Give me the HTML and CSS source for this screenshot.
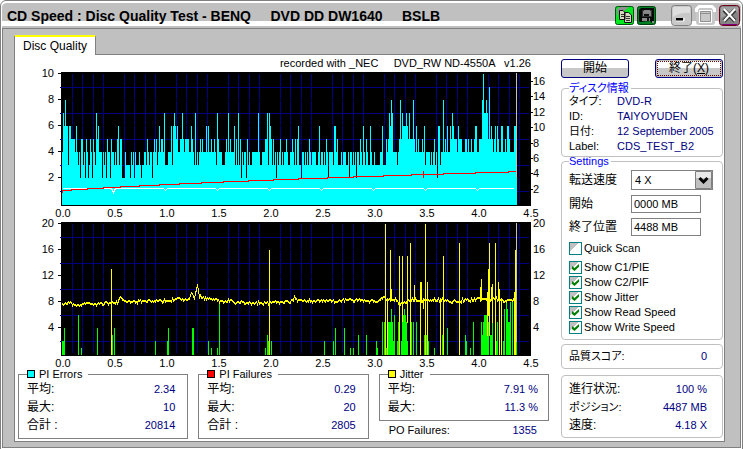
FILE: index.html
```html
<!DOCTYPE html>
<html lang="ja">
<head>
<meta charset="utf-8">
<title>CD Speed : Disc Quality Test</title>
<link rel="stylesheet" href="styles.css">
</head>
<body>
<div class="window">
  <header class="titlebar">
    <h1 class="title">CD Speed : Disc Quality Test - BENQ     DVD DD DW1640     BSLB</h1>
    <button class="tool" type="button" aria-label="Copy">
      <svg viewBox="0 0 19 19" width="19" height="19">
        <rect x=".5" y=".5" width="18" height="18" rx="2" fill="#00e820" stroke="#005010"/>
        <path d="M2 3 5 1H14L9 5 5 6 2 10Z" fill="#909090"/>
        <path d="M4.500 4.500H8l2 2V13.500H4.500ZM9.500 6.500H13.500L16.500 9V16.500H9.500Z" fill="#d8d8c0" stroke="#101010"/>
        <path d="M6 8.500h3M6 10.500h3M11 10.500h4M11 12.500h4M11 14.500h4" stroke="#303030"/>
      </svg>
    </button>
    <button class="tool" type="button" aria-label="Save">
      <svg viewBox="0 0 19 19" width="19" height="19">
        <rect x=".5" y=".5" width="18" height="18" rx="2" fill="#008020" stroke="#004010"/>
        <path d="M2 4 4 2H17V17H15L13 15 3 16 2 15Z" fill="#080808"/>
        <path d="M5.500 4.500H14.500V10.500H5.500Z" fill="#808080" stroke="#303030"/>
        <path d="M7 4h6v3H7ZM5 12h8v3H5ZM15 15h2v2h-2Z" fill="#888"/>
        <path d="M10 12h2v3h-2ZM7 8h5v2H7Z" fill="#101010"/>
      </svg>
    </button>
    <button class="tool tool-min" type="button" aria-label="Minimize">
      <svg viewBox="0 0 21 21" width="21" height="21">
        <rect x=".5" y=".5" width="20" height="20" rx="3" fill="#c8c8c8" stroke="#808080"/>
        <path d="M2 2H19V8Q10 7 2 12Z" fill="#dedede"/>
        <path d="M5 13h7v3H5Z"/><path d="M5 16h8v-3" fill="none" stroke="#fff"/>
      </svg>
    </button>
    <button class="tool" type="button" aria-label="Maximize">
      <svg viewBox="0 0 21 21" width="21" height="21">
        <rect x="1" y="1" width="19" height="19" rx="3" fill="#c8c8c8"/>
        <path d="M1.500 7V4L4 1.500H17L19.500 4V7" fill="none" stroke="#fff" stroke-width="3"/>
        <path d="M5.500 6.500H15.500V16.500H5.500ZM5.500 8.500H15.500" fill="none" stroke="#909090"/>
        <path d="M4.500 18V5.500H16.500V17.500H4.500" fill="none" stroke="#fff"/>
      </svg>
    </button>
    <button class="tool" type="button" aria-label="Close">
      <svg viewBox="0 0 21 21" width="21" height="21">
        <rect x=".5" y=".5" width="20" height="20" rx="3" fill="#858585" stroke="#700018"/>
        <path d="M3 19.500H18" stroke="#800080"/>
        <path d="M2 2H19V7Q10 8 2 13Z" fill="#a0a0a0"/>
        <path d="M5 5 16 16M16 5 5 16" stroke="#333" stroke-width="4"/>
        <path d="M5 4 16 16M16 4 5 16" stroke="#fff" stroke-width="2"/>
      </svg>
    </button>
  </header>

  <main class="content">
    <div class="tabs" role="tablist"><button class="tab" type="button" role="tab" aria-selected="true">Disc Quality</button></div>
    <div class="panel" role="tabpanel">
      <section class="results">
        <p class="recorder">recorded with _NEC     DVD_RW ND-4550A   v1.26</p>
        <svg class="chart" id="errors" viewBox="18 71 531 146" role="img" aria-label="PI Errors"></svg>
        <svg class="chart" id="failures" viewBox="18 217 531 153" role="img" aria-label="PI Failures"></svg>
        <div class="stats">
          <fieldset class="stat">
            <legend><span class="swatch cyan"></span>PI Errors</legend>
            <dl class="rows">
              <div><dt>平均:</dt><dd>2.34</dd></div>
              <div><dt>最大:</dt><dd>10</dd></div>
              <div><dt>合計 :</dt><dd>20814</dd></div>
            </dl>
          </fieldset>
          <fieldset class="stat">
            <legend><span class="swatch red"></span>PI Failures</legend>
            <dl class="rows">
              <div><dt>平均:</dt><dd>0.29</dd></div>
              <div><dt>最大:</dt><dd>20</dd></div>
              <div><dt>合計 :</dt><dd>2805</dd></div>
            </dl>
          </fieldset>
          <div class="jitter">
            <fieldset class="stat">
              <legend><span class="swatch yellow"></span>Jitter</legend>
              <dl class="rows">
                <div><dt>平均:</dt><dd>7.91 %</dd></div>
                <div><dt>最大:</dt><dd>11.3 %</dd></div>
              </dl>
            </fieldset>
            <dl class="rows outside"><div><dt>PO Failures:</dt><dd>1355</dd></div></dl>
          </div>
        </div>
      </section>

      <aside class="side">
        <div class="actions">
          <button class="push" type="button">開始</button>
          <button class="push focused" type="button">終了(<u>X</u>)</button>
        </div>
        <fieldset class="group">
          <legend>ディスク情報</legend>
          <dl class="info">
            <dt>タイプ:</dt><dd>DVD-R</dd>
            <dt>ID:</dt><dd>TAIYOYUDEN</dd>
            <dt>日付:</dt><dd>12 September 2005</dd>
            <dt>Label:</dt><dd>CDS_TEST_B2</dd>
          </dl>
        </fieldset>
        <fieldset class="group settings">
          <legend>Settings</legend>
          <div class="fields">
            <label for="speed">転送速度</label>
            <span class="combo">
              <select id="speed"><option>4 X</option></select>
              <svg class="arrow" viewBox="0 0 17 18" width="17" height="18">
                <path d="M.500.500H16.500V17.500H.500Z" fill="#e8e8e8" stroke="#808080"/>
                <path d="M1 7H16V17H1Z" fill="#c0c0c0"/>
                <path d="M4.500 7 8.500 11 12.500 7" fill="none" stroke="#000" stroke-width="3"/>
              </svg>
            </span>
            <label for="from">開始</label><input id="from" type="text" value="0000 MB">
            <label for="to">終了位置</label><input id="to" type="text" value="4488 MB">
          </div>
          <label class="check quick"><input type="checkbox">Quick Scan</label>
          <label class="check"><input type="checkbox" checked>Show C1/PIE</label>
          <label class="check"><input type="checkbox" checked>Show C2/PIF</label>
          <label class="check"><input type="checkbox" checked>Show Jitter</label>
          <label class="check"><input type="checkbox" checked>Show Read Speed</label>
          <label class="check"><input type="checkbox" checked>Show Write Speed</label>
        </fieldset>
        <dl class="rows box score"><div><dt class="kana">品質スコア:</dt><dd>0</dd></div></dl>
        <dl class="rows box progress">
          <div><dt>進行状況:</dt><dd>100 %</dd></div>
          <div><dt class="kana">ポジション:</dt><dd>4487 MB</dd></div>
          <div><dt>速度:</dt><dd>4.18 X</dd></div>
        </dl>
      </aside>
    </div>
  </main>
</div>
<script src="charts.js"></script>
</body>
</html>
```
FILE: styles.css
```css
* { box-sizing: border-box; }

body {
  margin: 0;
  background: #fff;
  color: #000;
  font: 11px/15px "Liberation Sans", "Noto Sans CJK JP", sans-serif;
  font-feature-settings: "palt";
}

button, input, select { font: inherit; color: inherit; }
dl, dd, p, h1, fieldset { margin: 0; }
legend { padding: 0; }

.window {
  display: flex;
  flex-direction: column;
  min-height: 100vh;
  border: 1px solid #808080;
  border-radius: 6px 6px 0 0;
  padding: 1px;
  background: #fff;
}

.titlebar {
  display: flex;
  align-items: center;
  gap: 3px;
  height: 26px;
  padding: 0 1px 0 5px;
  border-top: 1px solid #fff;
  border-radius: 5px 5px 0 0;
  background: linear-gradient(#c0c0c0 18px, #fff 18px, #fff 23px, #c0c0c0 23px);
}

.title {
  flex: 1;
  font-size: 14px;
  line-height: 18px;
  white-space: pre;
  overflow: hidden;
}

.tool { display: flex; flex: none; padding: 0; border: 0; background: none; }
.tool-min { margin-left: 12px; }

.content {
  flex: 1;
  display: flex;
  flex-direction: column;
  padding: 6px 15px 5px 11px;
  border: 1px solid #808080;
  background: #c0c0c0;
}

.tabs { display: flex; }

.tab {
  height: 20px;
  margin-bottom: -1px;
  padding: 0 8px;
  border: 1px solid #808080;
  border-width: 0 1px;
  border-top: 2px solid #ff0;
  border-radius: 2px 2px 0 0;
  background: #fff;
  font-size: 12px;
  z-index: 1;
}

.panel {
  flex: 1;
  display: flex;
  gap: 12px;
  padding: 0 1px 2px 3px;
  border: 1px solid #808080;
  background: #fff;
}

.results { flex: 1; min-width: 0; }

.recorder {
  padding-right: 18px;
  line-height: 16px;
  height: 16px;
  text-align: right;
  white-space: pre;
}

.chart { display: block; width: 100%; height: auto; overflow: visible; }
.chart text { font-size: 11px; }

.stats { display: grid; grid-template-columns: repeat(3, 1fr); gap: 10px; }

.stat { min-width: 0; padding: 2px 12px 3px 8px; border: 1px solid #808080; }

.stat legend {
  display: flex;
  align-items: center;
  gap: 4px;
  padding-right: 6px;
  background: #fff;
  line-height: 8px;
  height: 8px;
}

.swatch { width: 8px; height: 8px; border: 1px solid #000; }
.cyan { background: #0ff; }
.red { background: #f00; }
.yellow { background: #ff0; }

.rows > div { display: flex; justify-content: space-between; line-height: 18px; }
.rows dt { font-size: 12px; }
.rows .kana, .outside dt { font-size: 11px; }
.rows dd, .info dd { color: #000080; }
.jitter .stat { padding-bottom: 4px; padding-right: 10px; }
.outside { padding: 0 12px 0 10px; }

.side { flex: 0 0 162px; min-width: 0; padding-top: 4px; }

.actions { display: flex; justify-content: space-between; margin-bottom: 6px; }

.push {
  width: 68px;
  height: 19px;
  padding: 0;
  border: 1px solid #000080;
  border-radius: 3px;
  background: linear-gradient(#fff 50%, #c8c8c8 50%);
  font-size: 12px;
  line-height: 15px;
}

.focused { outline: 1px dotted #600; outline-offset: -3px; box-shadow: inset 0 0 0 1px #c0c0c0; }

.group, .box {
  min-width: 0;
  padding: 2px 7px;
  border: 1px solid #c0c0c0;
  border-radius: 4px;
}

.group legend { padding: 0 2px 0 0; line-height: 8px; height: 8px; color: #00f; }

.info { display: grid; grid-template-columns: 48px 1fr; grid-auto-rows: 15px; white-space: nowrap; }

.settings { padding: 5px 7px 4px; }

.fields {
  display: grid;
  grid-template-columns: 62px 1fr;
  grid-template-rows: 20px 18px 18px;
  row-gap: 5px;
  align-items: center;
  margin-bottom: 5px;
}

.fields label { font-size: 12px; }

.fields input { width: 70px; height: 18px; padding: 0 2px; border: 1px solid #808080; background: #fff; }

.combo { position: relative; width: 82px; height: 20px; }

.combo select {
  width: 100%;
  height: 20px;
  padding: 0 3px;
  border: 1px solid #808080;
  border-radius: 0;
  background: #fff;
  appearance: none;
}

.arrow { position: absolute; top: 1px; right: 1px; pointer-events: none; }

.check { display: flex; align-items: center; gap: 2px; line-height: 15px; }
.quick { margin-bottom: 4px; }

.check input {
  appearance: none;
  display: grid;
  place-items: center;
  width: 13px;
  height: 13px;
  margin: 0;
  border: 1px solid #008080;
  background: linear-gradient(135deg, #c0c0c0 40%, #fff 40%);
}

.check input:checked::before {
  content: "";
  width: 7px;
  height: 7px;
  background: #008000;
  clip-path: polygon(0 28%, 36% 58%, 100% 0, 100% 40%, 36% 100%, 0 70%);
}

.score { margin-top: 4px; padding: 2px 15px 3px 7px; }
.progress { margin-top: 6px; padding: 4px 15px 3px 7px; }
```
FILE: charts.js
```js
const NS = 'http://www.w3.org/2000/svg';

function add(svg, tag, attrs, text) {
  const node = document.createElementNS(NS, tag);
  for (const key in attrs) node.setAttribute(key, attrs[key]);
  if (text !== undefined) node.textContent = text;
  svg.appendChild(node);
}

function rect(svg, x, y, width, height, fill) {
  add(svg, 'rect', { x, y, width, height, fill, 'shape-rendering': 'crispEdges' });
}

function line(svg, points, stroke) {
  add(svg, 'polyline', {
    points: points.map(([x, y]) => `${x + 0.5},${y + 0.5}`).join(' '),
    fill: 'none', stroke, 'stroke-width': 1, 'shape-rendering': 'crispEdges'
  });
}

/* Plot background, grid, ticks and axis labels; labels are spaced 26 units apart. */
function frame(svg, top, left) {
  rect(svg, 61, top, 470, 134, '#000');
  for (let i = 1; i < 45; i++) {
    if (i % 5) {
      for (let k = 0; k < 5; k++) {
        rect(svg, Math.round(61.6 + i * 10.4), top + 2 + k * 26, 1, 25, '#000080');
      }
    }
  }
  for (let k = 0; k < 5; k++) {
    rect(svg, 60, top + 15 + k * 26, 469, 1, '#000080');
    rect(svg, 58, top + 1 + k * 26, 3, 1, '#000');
    add(svg, 'text', { x: 54, y: top + 5 + k * 26, 'text-anchor': 'end' }, left[k]);
  }
  for (let i = 0; i < 10; i++) {
    add(svg, 'text', { x: 63 + i * 52, y: top + 145, 'text-anchor': 'middle' }, (i / 2).toFixed(1));
  }
}

/* Column levels: "start-end:level" or "start:level"; later entries win. */
const high = `63-67:6 63:7 65:8 69-70:6 71-74:5 76:6 81-82:5 86:5 90:5 93:5 96:7 97:5 98:6 104:5 107:5
111:5 114:5 117:5 118:6 120-121:5 128:5 147:5 154:5 156:5 159:6 161-162:5 164:7 171:6 173-175:6 174:7
176:5 177:6 180-181:5 182:7 183:5 185-188:5 191:6 192:5 195:7 200:5 202:5 206:6 208:6 211:5 214:5 217:7
218:5 226:5 228:7 230:5 234:6 236:5 238:7 240:5 243:6 247:5 258:7 265-266:5 267:7 268:6 269:7 270:6
271:5 273:5 280:5 286:5 292:5 295:5 297:5 298:6 309:5 319:6 323:5 326:5 333:5 334-335:6 337:5 346:5
354:5 359-360:5 362:5 363:6 366:5 370:6 382:6 386:5 388:5 389:7 390:6 391:8 392:7 399-412:5 400:8 402:7
403-407:6 406:7 409:7 413:8 414:5 416:6 418:5 422:5 424:6 434:5 438-439:6 443:8 445:5 447:6 450:6 451:5
452:7 453:6 454-456:5 458:6 459-461:5 465-466:5 468:5 471:5 474:5 475-476:6 479-492:5 482:8 483:10
484-485:7 486:8 487:7 489:9 491:6 494:5 495:6 497:6 498:5 501-502:6 505:5 507-508:6 509:5 514-516:6`;
const low = `68:3 78:3 80:2 83:3 85:2 88:2 89:3 92:2 95:3 102:2 104:3 106:2 110:2 114:3 116:3 119:3
122-124:2 126-129:3 130:2 132:3 134:2 136-138:3 140-143:3 141:2 146:3 149:3 152:2 157:3 165-167:3 172:3
194:3 196:3 198:3 216:3 222-224:3 235:3 237:3 239:3 241:2 243:3 246:2 248:3 250-251:3 260-261:3 268:3
272:3 274:3 276:2 278:3 281:3 283:3 288-289:3 294:3 296:3 299-300:3 301:2 304:3 306:3 308:3 311:3
316-317:3 320:3 323:3 325:3 328:2 333:3 338-340:3 342:3 346-347:3 349:2 352:3 354:3 356:2 359:3 362:3
365:3 368-369:3 372-373:3 375-379:3 383-385:3 397:3 425:3 430:3 432:3 435:3 437:2 440:3`;

function levels(text, into) {
  for (const item of text.split(/\s+/)) {
    const [span, level] = item.split(':');
    const [from, to] = span.split('-').map(Number);
    for (let x = from; x <= (to || from); x++) into[x] = Number(level);
  }
  return into;
}

function drawErrors() {
  const svg = document.getElementById('errors');
  frame(svg, 72, ['10', '8', '6', '4', '2']);
  const cols = levels(low, levels(high, {}));
  for (let x = 62; x <= 516; x++) {
    const y = 204 - (cols[x] || 4) * 13;
    rect(svg, x, y, 1, 205 - y, '#0ff');
  }
  const notches = [[62, 188]];
  for (let x = 113; x < 500; x += 52) {
    notches.push([x - 2, 188], [x, x === 113 ? 192 : 190], [x + 2, 188]);
  }
  notches.push([513, 188]);
  line(svg, notches, '#fff');
  const steps = [62, 71, 87, 103, 120, 139, 159, 179, 201, 223, 248, 273, 298, 327, 353, 383, 411, 443, 475, 508, 515];
  const read = [[62, 192]];
  for (let i = 0; i < steps.length - 1; i++) {
    const y = Math.max(171, 190 - i);
    read.push([steps[i], y], [steps[i + 1], y]);
  }
  line(svg, read, '#f00');
  rect(svg, 423, 171, 1, 7, '#f00');
  rect(svg, 516, 73, 1, 104, '#c0c0c0');
  ['16', '14', '12', '10', '8', '6', '4', '2'].forEach((label, i) => {
    const y = Math.round(81 + i * 15.4);
    rect(svg, 530, y, 3, 1, '#000');
    add(svg, 'text', { x: 533, y: y + 4 }, label);
  });
}

/* C2/PIF columns as x:top pairs. */
const pif = `62:341 63:341 64:328 78:315 81:348 97:328 112:335 114:328 155:341 167:341 168:328 192:328
193:328 208:341 211:348 217:348 219:302 265:348 267:335 268:341 269:335 271:341 324:341 333:341 335:328
344:328 350:348 353:348 358:335 366:335 376:341 377:348 382:322 384:322 386:348 387:335 388:322 389:322
390:322 391:309 392:322 393:341 394:315 397:341 398:322 399:348 401:341 402:322 403:315 404:309 405:315
406:322 407:341 411:322 413:322 416:322 424:335 425:335 426:335 428:341 434:348 442:335 443:335 447:328
465:335 466:341 470:348 473:322 481:322 482:335 483:322 484:315 485:315 486:315 487:315 488:322 490:335
491:335 492:309 496:341 497:322 499:328 503:341 504:309 506:302 507:309 508:322 509:322 510:302 512:302
514:341 515:341 516:341`;

/* Jitter peaks as x:top-bottom. */
const peaks = `111:269-354 269:250-354 385:224-354 387:298-354 390:250-300 391:289-300 399:256-354
402:256-321 407:256-322 410:243-354 414:285-300 420:282-354 421:282-302 423:298-308 425:224-354
427:282-354 440:298-354 443:256-354 459:243-354 480:287-300 481:279-300 487:292-335 488:269-315
489:243-335 491:287-300 492:284-322 495:243-354 498:282-300 499:289-354 501:298-354 514:292-354
515:250-354`;

const trend = [[62, 302], [71, 302], [74, 304], [88, 303], [105, 302], [117, 302], [120, 296], [124, 301],
  [150, 300], [168, 300], [178, 298], [188, 299], [191, 293], [194, 297], [197, 285], [199, 296], [204, 297],
  [212, 299], [225, 300], [250, 302], [290, 301], [294, 297], [300, 300], [330, 300], [350, 299], [375, 300],
  [381, 297], [395, 299], [400, 302], [412, 299], [425, 299], [440, 299], [455, 300], [480, 298], [495, 298],
  [502, 300], [514, 298]];

function drawFailures() {
  const svg = document.getElementById('failures');
  frame(svg, 222, ['20', '16', '12', '8', '4']);
  for (const [x, top] of pif.split(/\s+/).map(p => p.split(':').map(Number))) {
    rect(svg, x, top, 1, 355 - top, '#0f0');
  }
  const path = [];
  let seed = 17;
  let k = 0;
  for (let x = 62; x <= 514; x++) {
    while (trend[k + 1][0] < x) k++;
    const [x0, y0] = trend[k];
    const [x1, y1] = trend[k + 1];
    seed = (seed * 25173 + 13849) % 65536;
    const noise = [-1, -1, 0, 0, 1, 1, 0, 2][seed >> 13];
    path.push([x, Math.round(y0 + (y1 - y0) * (x - x0) / (x1 - x0)) + noise]);
  }
  for (const [x, y] of path) rect(svg, x, y, 1, 2, '#ff0');
  line(svg, path, '#ff0');
  for (const item of peaks.split(/\s+/)) {
    const [x, span] = item.split(':');
    const [top, bottom] = span.split('-').map(Number);
    rect(svg, x, top, 1, bottom - top + 1, '#ff0');
  }
  rect(svg, 516, 223, 1, 119, '#c0c0c0');
  ['20', '16', '12', '8', '4'].forEach((label, i) => {
    add(svg, 'text', { x: 533, y: 227 + i * 26 }, label);
  });
}

drawErrors();
drawFailures();
```
